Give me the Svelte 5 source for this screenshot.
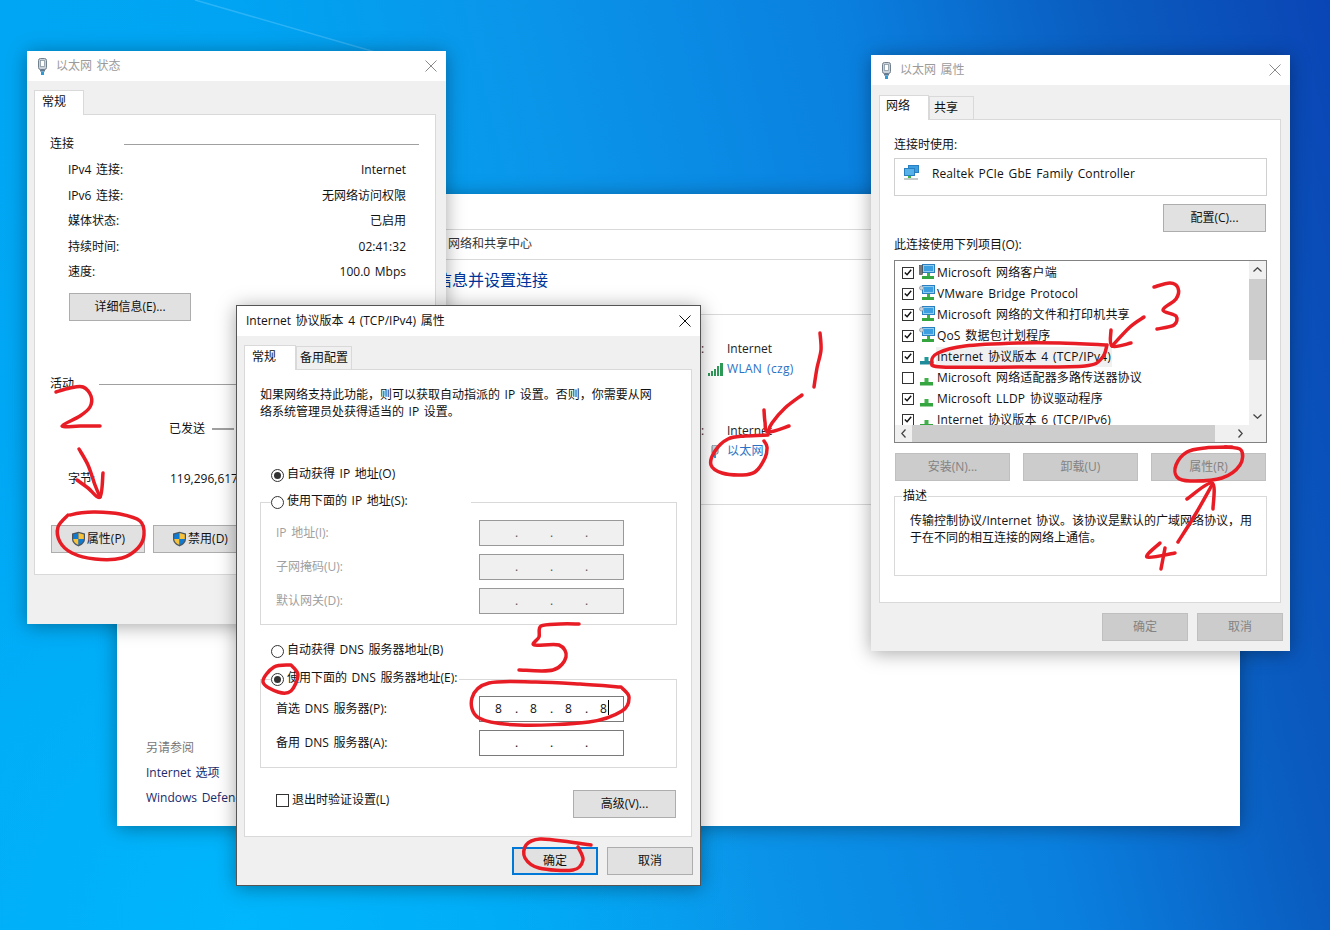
<script>
  // hand drawn red marks, one list of points per stroke
  const marks = [
    [[820,333],[821,350],[817,368],[814,387]],
    [[802,395],[785,408],[772,423],[768,432]],
    [[764,410],[765,422],[768,432],[789,426]],
    [[768,435],[745,436],[728,439],[715,451],[711,465],[722,473],[742,475],[755,472],[765,458],[767,447],[764,441]],
    [[56,392],[70,388],[83,387],[91,396],[90,407],[80,416],[62,426],[80,426],[100,426]],
    [[79,449],[88,465],[95,485],[100,497]],
    [[77,480],[88,488],[100,497],[103,473]],
    [[68,515],[58,527],[60,542],[72,553],[95,559],[122,558],[138,548],[144,535],[140,521],[120,514],[95,512],[80,513],[70,515]],
    [[1154,287],[1170,283],[1178,288],[1176,299],[1163,310],[1176,316],[1174,325],[1157,329]],
    [[1144,317],[1130,327],[1112,346]],
    [[1111,330],[1112,346],[1131,343]],
    [[1107,345],[1060,343],[1018,343],[965,346],[938,353],[932,362],[942,367],[1018,367],[1085,366],[1102,358],[1107,345]],
    [[1232,447],[1205,448],[1187,452],[1176,465],[1177,477],[1190,481],[1222,478],[1240,465],[1241,450],[1225,447]],
    [[1212,485],[1195,515],[1178,542]],
    [[1187,499],[1212,483],[1213,509]],
    [[1160,543],[1147,557],[1175,553]],
    [[1165,548],[1161,569]],
    [[579,624],[560,624],[541,626],[539,637],[534,645],[559,645],[566,657],[553,670],[519,670]],
    [[291,665],[274,667],[263,682],[278,692],[291,691],[298,675],[291,665]],
    [[621,687],[580,684],[536,682],[489,683],[472,698],[479,718],[519,725],[589,722],[622,711],[629,697],[621,687]],
    [[591,845],[570,842],[540,839],[526,845],[525,858],[539,868],[573,870],[583,860],[578,847]]
  ];

  // catmull-rom through the points
  function smooth(pts) {
    let d = `M${pts[0][0]} ${pts[0][1]}`;
    for (let i = 0; i < pts.length - 1; i++) {
      const a = pts[i - 1] || pts[i];
      const b = pts[i];
      const c = pts[i + 1];
      const e = pts[i + 2] || c;
      const c1x = b[0] + (c[0] - a[0]) / 6;
      const c1y = b[1] + (c[1] - a[1]) / 6;
      const c2x = c[0] - (e[0] - b[0]) / 6;
      const c2y = c[1] - (e[1] - b[1]) / 6;
      d += ` C${c1x} ${c1y} ${c2x} ${c2y} ${c[0]} ${c[1]}`;
    }
    return d;
  }

  const statusRows = [
    ['IPv4 连接:', 'Internet'],
    ['IPv6 连接:', '无网络访问权限'],
    ['媒体状态:', '已启用'],
    ['持续时间:', '02:41:32'],
    ['速度:', '100.0 Mbps']
  ];

  const components = [
    { name: 'Microsoft 网络客户端', on: true, icon: 'client' },
    { name: 'VMware Bridge Protocol', on: true, icon: 'service' },
    { name: 'Microsoft 网络的文件和打印机共享', on: true, icon: 'service' },
    { name: 'QoS 数据包计划程序', on: true, icon: 'service' },
    { name: 'Internet 协议版本 4 (TCP/IPv4)', on: true, icon: 'proto', selected: true },
    { name: 'Microsoft 网络适配器多路传送器协议', on: false, icon: 'proto' },
    { name: 'Microsoft LLDP 协议驱动程序', on: true, icon: 'proto' },
    { name: 'Internet 协议版本 6 (TCP/IPv6)', on: true, icon: 'proto' }
  ];
</script>

{#snippet plug()}
  <svg class="plug" width="10" height="17" viewBox="0 0 10 17">
    <rect x="0.5" y="0.5" width="8" height="11" rx="2" fill="#c9d2da" stroke="#71808e" />
    <rect x="2.5" y="2.5" width="4" height="6" fill="#fff" stroke="#8b98a4" stroke-width="0.8" />
    <rect x="2" y="11.5" width="5" height="2" fill="#62798f" />
    <rect x="3" y="13.5" width="3" height="3.5" fill="#2a9ad8" />
  </svg>
{/snippet}

{#snippet shield()}
  <svg class="shield" width="15" height="16" viewBox="0 0 15 16">
    <path d="M7.5 0.7L14 2.6V8C14 11.7 11 14 7.5 15.4C4 14 1 11.7 1 8V2.6Z" fill="#4a5560" />
    <path d="M7.5 2L7.5 8H2.2V3.5Z" fill="#0f7ad2" />
    <path d="M7.5 2L12.8 3.5V8H7.5Z" fill="#f6c13b" />
    <path d="M2.2 8H7.5V14C4.6 12.8 2.4 11 2.2 8Z" fill="#f6c13b" />
    <path d="M7.5 8H12.8C12.6 11 10.4 12.8 7.5 14Z" fill="#0f7ad2" />
  </svg>
{/snippet}

{#snippet check(on)}
  <span class="check">
    {#if on}
      <svg width="11" height="11" viewBox="0 0 11 11"><path d="M2 5.5L4.5 8L9 2.5" fill="none" stroke="#111" stroke-width="1.6" /></svg>
    {/if}
  </span>
{/snippet}

{#snippet radio(on)}
  <span class="radio">{#if on}<span class="dot"></span>{/if}</span>
{/snippet}

{#snippet ip(disabled, val, caret)}
  <div class="ip" class:off={disabled}>
    {#each [0, 1, 2, 3] as i}
      <span class="seg">
        {val}
        {#if caret && i === 3}<span class="caret"></span>{/if}
      </span>
      {#if i < 3}<span class="sep">.</span>{/if}
    {/each}
  </div>
{/snippet}

{#snippet compIcon(kind, active)}
  <svg class="comp-icon" width="16" height="17" viewBox="0 0 16 17">
    {#if kind === 'proto'}
      <rect x="5.5" y="9" width="4" height="4" fill={active ? '#1f9a9a' : '#3fb04a'} />
      <rect x="1" y="13" width="13" height="3.5" fill={active ? '#1f8a9a' : '#35a540'} />
    {:else}
      <rect x="3.5" y="0.5" width="12" height="8" fill="#8fcdf0" stroke="#2a7fc0" />
      <rect x="5" y="2" width="9" height="5" fill="#3c9fdf" />
      <rect x="8" y="9" width="3" height="3" fill="#3fb04a" />
      <rect x="3" y="12" width="12" height="3" fill="#35a540" />
      {#if kind === 'client'}
        <rect x="0.5" y="1.5" width="3" height="9" fill="#777" stroke="#444" stroke-width="0.6" />
      {:else}
        <circle cx="2.5" cy="3" r="2" fill="#cfd6dc" stroke="#8b98a4" stroke-width="0.8" />
      {/if}
    {/if}
  </svg>
{/snippet}

<main class="desktop">
  <svg class="streak" width="400" height="60" viewBox="0 0 400 60"><path d="M195 0L375 52" /></svg>

  <!-- control panel behind the dialogs -->
  <section class="win cp">
    <div class="cp-top"></div>
    <div class="cp-crumb">网络和共享中心</div>
    <div class="cp-head">查看基本网络信息并设置连接</div>
    <div class="cp-main">
      <aside class="cp-side">
        <div class="see">另请参阅</div>
        <div class="side-link">Internet 选项</div>
        <div class="side-link">Windows Defender 防火墙</div>
      </aside>
      <div class="cp-nets">
        <div class="net">
          <div class="net-col">:</div>
          <div>
            <div class="net-type">Internet</div>
            <div class="net-link">
              <svg class="wifi" width="16" height="13" viewBox="0 0 16 13">
                <rect x="0" y="10" width="2" height="3" fill="#2f9a58" />
                <rect x="3" y="8" width="2" height="5" fill="#2f9a58" />
                <rect x="6" y="6" width="2" height="7" fill="#2f9a58" />
                <rect x="9" y="3" width="2" height="10" fill="#2f9a58" />
                <rect x="12" y="0" width="3" height="13" fill="#2f9a58" />
              </svg>
              WLAN (czg)
            </div>
          </div>
        </div>
        <div class="net second">
          <div class="net-col">:</div>
          <div>
            <div class="net-type">Internet</div>
            <div class="net-link">
              <svg class="wifi" width="16" height="13" viewBox="0 0 16 13">
                <rect x="4" y="0" width="6" height="9" rx="1.5" fill="#c9d2da" stroke="#71808e" />
                <rect x="6" y="9" width="2" height="4" fill="#2a9ad8" />
              </svg>
              以太网
            </div>
          </div>
        </div>
      </div>
    </div>
  </section>

  <!-- ethernet status -->
  <section class="win status">
    <header class="title dim">
      {@render plug()}
      <span class="title-text">以太网 状态</span>
      <span class="close"><svg width="12" height="12" viewBox="0 0 12 12"><path d="M0.5 0.5L11.5 11.5M11.5 0.5L0.5 11.5" stroke="#8a8a8a" fill="none" /></svg></span>
    </header>
    <div class="body status-body">
      <div class="tabs">
        <div class="tab active" style="width: 50px">常规</div>
      </div>
      <div class="panel status-panel">
        <div class="group-head first"><span class="gh-text">连接</span><span class="gh-line"></span></div>
        <div class="stat-rows">
          {#each statusRows as r}
            <div class="stat-row"><span>{r[0]}</span><span>{r[1]}</span></div>
          {/each}
        </div>
        <button class="btn detail">详细信息(E)...</button>
        <div class="group-head second"><span class="gh-text short">活动</span><span class="gh-line"></span></div>
        <div class="sent"><span>已发送</span><span class="sent-line"></span></div>
        <div class="bytes"><span class="bytes-l">字节:</span><span>119,296,617</span></div>
        <div class="status-btns">
          <button class="btn shield-btn">{@render shield()}属性(P)</button>
          <button class="btn shield-btn">{@render shield()}禁用(D)</button>
        </div>
      </div>
    </div>
  </section>

  <!-- adapter properties -->
  <section class="win adapter">
    <header class="title dim">
      {@render plug()}
      <span class="title-text">以太网 属性</span>
      <span class="close"><svg width="12" height="12" viewBox="0 0 12 12"><path d="M0.5 0.5L11.5 11.5M11.5 0.5L0.5 11.5" stroke="#8a8a8a" fill="none" /></svg></span>
    </header>
    <div class="body adapter-body">
      <div class="tabs">
        <div class="tab active" style="width: 50px">网络</div>
        <div class="tab" style="width: 45px">共享</div>
      </div>
      <div class="panel adapter-panel">
        <div class="lbl first-lbl">连接时使用:</div>
        <div class="nic">
          <svg width="16" height="16" viewBox="0 0 16 16">
            <rect x="4.5" y="0.5" width="10" height="7" fill="#3c9fdf" stroke="#2a7fc0" />
            <rect x="0.5" y="3.5" width="10" height="7" fill="#56b2e8" stroke="#2a7fc0" />
            <rect x="4" y="11" width="3" height="2" fill="#3fb04a" />
            <rect x="0" y="13" width="14" height="2" fill="#c4ccc8" />
          </svg>
          <span>Realtek PCIe GbE Family Controller</span>
        </div>
        <div class="cfg-row"><button class="btn cfg">配置(C)...</button></div>
        <div class="lbl">此连接使用下列项目(O):</div>
        <div class="list">
          <div class="list-rows">
            {#each components as c}
              <div class="list-row">
                {@render check(c.on)}
                {@render compIcon(c.icon, c.selected)}
                <span class="comp-name" class:sel={c.selected}>{c.name}</span>
              </div>
            {/each}
          </div>
          <div class="vbar">
            <svg width="9" height="5" viewBox="0 0 9 5"><path d="M0.5 4.5L4.5 0.8L8.5 4.5" fill="none" stroke="#444" stroke-width="1.3" /></svg>
            <div class="vtrack"><div class="vthumb"></div></div>
            <svg width="9" height="5" viewBox="0 0 9 5"><path d="M0.5 0.5L4.5 4.2L8.5 0.5" fill="none" stroke="#444" stroke-width="1.3" /></svg>
          </div>
          <div class="hbar">
            <svg width="5" height="9" viewBox="0 0 5 9"><path d="M4.5 0.5L0.8 4.5L4.5 8.5" fill="none" stroke="#444" stroke-width="1.3" /></svg>
            <div class="hthumb"></div>
            <svg width="5" height="9" viewBox="0 0 5 9"><path d="M0.5 0.5L4.2 4.5L0.5 8.5" fill="none" stroke="#444" stroke-width="1.3" /></svg>
          </div>
          <div class="corner"></div>
        </div>
        <div class="comp-btns">
          <button class="btn off">安装(N)...</button>
          <button class="btn off">卸载(U)</button>
          <button class="btn off">属性(R)</button>
        </div>
        <fieldset class="desc">
          <legend>描述</legend>
          传输控制协议/Internet 协议。该协议是默认的广域网络协议，用<br />
          于在不同的相互连接的网络上通信。
        </fieldset>
      </div>
      <div class="foot">
        <button class="btn off act">确定</button>
        <button class="btn off act">取消</button>
      </div>
    </div>
  </section>

  <!-- ipv4 properties, the active dialog -->
  <section class="win ipv4">
    <header class="title">
      <span class="title-text">Internet 协议版本 4 (TCP/IPv4) 属性</span>
      <span class="close"><svg width="12" height="12" viewBox="0 0 12 12"><path d="M0.5 0.5L11.5 11.5M11.5 0.5L0.5 11.5" stroke="#111" fill="none" /></svg></span>
    </header>
    <div class="body ipv4-body">
      <div class="tabs">
        <div class="tab active" style="width: 52px">常规</div>
        <div class="tab" style="width: 56px">备用配置</div>
      </div>
      <div class="panel ipv4-panel">
        <p class="intro">如果网络支持此功能，则可以获取自动指派的 IP 设置。否则，你需要从网<br />络系统管理员处获得适当的 IP 设置。</p>
        <div class="radio-row auto-ip">{@render radio(true)}自动获得 IP 地址(O)</div>
        <fieldset class="ip-box ip-static">
          <legend style="width: 200px"><span class="radio-row">{@render radio(false)}使用下面的 IP 地址(S):</span></legend>
          <div class="f-row"><span class="f-lbl muted">IP 地址(I):</span>{@render ip(true, '', false)}</div>
          <div class="f-row"><span class="f-lbl muted">子网掩码(U):</span>{@render ip(true, '', false)}</div>
          <div class="f-row"><span class="f-lbl muted">默认网关(D):</span>{@render ip(true, '', false)}</div>
        </fieldset>
        <div class="radio-row auto-dns">{@render radio(false)}自动获得 DNS 服务器地址(B)</div>
        <fieldset class="ip-box ip-dns">
          <legend style="width: 188px"><span class="radio-row">{@render radio(true)}使用下面的 DNS 服务器地址(E):</span></legend>
          <div class="f-row"><span class="f-lbl">首选 DNS 服务器(P):</span>{@render ip(false, '8', true)}</div>
          <div class="f-row"><span class="f-lbl">备用 DNS 服务器(A):</span>{@render ip(false, '', false)}</div>
        </fieldset>
        <div class="adv-row">
          <div class="verify">{@render check(false)}退出时验证设置(L)</div>
          <button class="btn adv">高级(V)...</button>
        </div>
      </div>
      <div class="foot">
        <button class="btn act primary">确定</button>
        <button class="btn act">取消</button>
      </div>
    </div>
  </section>

  <svg class="ink" width="1330" height="930" viewBox="0 0 1330 930">
    {#each marks as m}
      <path d={smooth(m)} />
    {/each}
  </svg>
</main>

<style>
  :global(body) {
    margin: 0;
  }
  .desktop {
    position: relative;
    width: 1330px;
    height: 930px;
    overflow: hidden;
    font-family: "Open Sans", "Noto Sans CJK SC", sans-serif;
    font-size: 12px;
    line-height: 16px;
    word-spacing: 1.5px;
    color: #111;
    background:
      radial-gradient(ellipse 520px 560px at 240px 930px, #00b6fc 0%, rgba(0, 182, 252, 0) 100%),
      linear-gradient(76deg, #00a8f4 0%, #00a4f2 30%, #0a96ea 47%, #0a7fde 69%, #0a5cc0 85%, #0a45b5 100%);
  }
  .streak {
    position: absolute;
    left: 0;
    top: 0;
  }
  .streak path {
    fill: none;
    stroke: rgba(120, 210, 255, 0.35);
    stroke-width: 1.5;
  }
  .win {
    position: absolute;
    box-sizing: border-box;
    background: #fff;
    border: 1px solid #9d9d9d;
    box-shadow: 0 2px 18px rgba(0, 0, 0, 0.35);
    display: flex;
    flex-direction: column;
  }
  .cp {
    left: 117px;
    top: 194px;
    width: 1123px;
    height: 632px;
    border: 0;
  }
  .status {
    left: 27px;
    top: 51px;
    width: 419px;
    height: 573px;
    border: 0;
  }
  .adapter {
    left: 871px;
    top: 55px;
    width: 419px;
    height: 596px;
    border: 0;
  }
  .ipv4 {
    left: 236px;
    top: 305px;
    width: 465px;
    height: 581px;
    border-color: #555;
  }
  .title {
    height: 30px;
    flex: none;
    display: flex;
    align-items: center;
    padding: 0 9px;
    background: #fff;
  }
  .dim {
    color: #9b9b9b;
  }
  .plug {
    margin: 0 8px 0 2px;
  }
  .title-text {
    flex: 1;
  }
  .close {
    display: flex;
  }
  .body {
    flex: 1;
    background: #f0f0f0;
    display: flex;
    flex-direction: column;
  }
  .tabs {
    display: flex;
    align-items: flex-end;
    height: 25px;
    position: relative;
    z-index: 1;
  }
  .tab {
    box-sizing: border-box;
    height: 23px;
    margin-bottom: 1px;
    padding: 3px 0 0 4px;
    border: 1px solid #d9d9d9;
    border-bottom: 0;
    background: #f0f0f0;
  }
  .tab.active {
    height: 25px;
    margin-bottom: 0;
    padding: 3px 0 0 6px;
    background: #fff;
  }
  .panel {
    box-sizing: border-box;
    background: #fff;
    border: 1px solid #d9d9d9;
    margin-top: -1px;
  }
  .btn {
    box-sizing: border-box;
    height: 28px;
    padding: 0;
    background: #e1e1e1;
    border: 1px solid #adadad;
    font: inherit;
    color: #111;
  }
  .btn.off {
    background: #cccccc;
    border-color: #bfbfbf;
    color: #838383;
  }

  /* control panel */
  .cp-top {
    height: 35px;
    flex: none;
  }
  .cp-crumb {
    height: 31px;
    flex: none;
    box-sizing: border-box;
    padding: 6px 0 0 331px;
    border-top: 1px solid #d9d9d9;
    border-bottom: 1px solid #d9d9d9;
    color: #333;
  }
  .cp-head {
    height: 55px;
    flex: none;
    box-sizing: border-box;
    padding: 9px 0 0 223px;
    border-bottom: 1px solid #d9d9d9;
    font-size: 16px;
    line-height: 22px;
    color: #003399;
  }
  .cp-main {
    flex: 1;
    display: flex;
    justify-content: space-between;
    min-height: 0;
  }
  .cp-side {
    align-self: flex-end;
    padding: 0 0 11px 29px;
  }
  .see {
    color: #777;
    height: 25px;
  }
  .side-link {
    height: 25px;
    color: #1a2a6c;
    white-space: nowrap;
  }
  .cp-nets {
    box-sizing: border-box;
    width: 790px;
    height: 190px;
    border-bottom: 1px solid #d9d9d9;
    padding: 26px 0 0 251px;
  }
  .net {
    display: flex;
    gap: 23px;
  }
  .net.second {
    margin-top: 46px;
  }
  .net-col {
    width: 3px;
    color: #333;
  }
  .net-type {
    height: 20px;
    color: #222;
  }
  .net-link {
    position: relative;
    color: #2b72c4;
    letter-spacing: 0.3px;
  }
  .wifi {
    position: absolute;
    left: -19px;
    top: 2px;
  }

  /* status */
  .status-body {
    padding: 9px 0 0 7px;
  }
  .status-body .tab.active {
    padding-left: 7px;
  }
  .status-panel {
    width: 402px;
    height: 461px;
  }
  .group-head {
    display: flex;
    align-items: center;
    height: 16px;
    padding: 0 16px 0 15px;
  }
  .group-head.first {
    margin-top: 21px;
  }
  .group-head.second {
    margin-top: 55px;
  }
  .gh-text {
    width: 74px;
  }
  .gh-text.short {
    width: 49px;
  }
  .gh-line {
    flex: 1;
    height: 1px;
    background: #a0a0a0;
  }
  .stat-rows {
    margin-top: 5.5px;
    padding: 0 29px 0 33px;
  }
  .stat-row {
    display: flex;
    justify-content: space-between;
    height: 25.5px;
    align-items: center;
  }
  .detail {
    display: block;
    width: 122px;
    margin: 8px 0 0 34px;
  }
  .sent {
    display: flex;
    align-items: center;
    gap: 7px;
    height: 16px;
    margin-top: 29px;
    padding-left: 134px;
  }
  .sent-line {
    width: 22px;
    height: 2px;
    background: #a0a0a0;
  }
  .bytes {
    display: flex;
    height: 16px;
    margin-top: 34px;
    padding-left: 33px;
    white-space: nowrap;
  }
  .bytes-l {
    width: 102px;
  }
  .status-btns {
    display: flex;
    gap: 8px;
    margin: 38px 0 0 16px;
  }
  .shield-btn {
    width: 94px;
    display: flex;
    align-items: center;
    justify-content: center;
    gap: 1px;
  }

  /* adapter */
  .adapter-body {
    padding: 10px 7px 0 8px;
  }
  .adapter-body .tab.active {
    padding-top: 2px;
  }
  .adapter-panel {
    width: 402px;
    height: 484px;
    padding-left: 14px;
  }
  .lbl {
    height: 16px;
    margin-top: 5px;
  }
  .first-lbl {
    margin-top: 17px;
  }
  .nic {
    box-sizing: border-box;
    display: flex;
    gap: 12px;
    width: 373px;
    height: 38px;
    margin-top: 5px;
    padding: 6px 0 0 9px;
    border: 1px solid #d0d0d0;
  }
  .nic span {
    margin-top: 1px;
    letter-spacing: 0.1px;
  }
  .cfg-row {
    display: flex;
    justify-content: flex-end;
    width: 372px;
    margin-top: 8px;
  }
  .cfg {
    width: 103px;
  }
  .list {
    box-sizing: border-box;
    width: 373px;
    height: 183px;
    margin-top: 7px;
    border: 1px solid #828282;
    display: grid;
    grid-template-columns: 354px 17px;
    grid-template-rows: 164px 17px;
  }
  .list-rows {
    overflow: hidden;
    padding-top: 1px;
  }
  .list-row {
    display: flex;
    align-items: center;
    height: 21px;
    padding-left: 7px;
    white-space: nowrap;
  }
  .check {
    box-sizing: border-box;
    flex: none;
    display: flex;
    align-items: center;
    justify-content: center;
    width: 12px;
    height: 12px;
    border: 1px solid #333;
    background: #fff;
  }
  .comp-icon {
    flex: none;
    margin: 0 1px 0 5px;
  }
  .comp-name {
    padding: 2px 1px;
    letter-spacing: 0.15px;
  }
  .comp-name.sel {
    background: #f0f0f0;
  }
  .vbar {
    display: flex;
    flex-direction: column;
    align-items: center;
    background: #f0f0f0;
    padding: 6px 0;
    box-sizing: border-box;
    gap: 7px;
  }
  .vtrack {
    flex: 1;
    width: 100%;
  }
  .vthumb {
    height: 81px;
    background: #cdcdcd;
  }
  .hbar {
    display: flex;
    align-items: center;
    background: #f0f0f0;
    padding: 0 6px;
    gap: 6px;
  }
  .hthumb {
    width: 303px;
    height: 100%;
    margin-right: auto;
    background: #cdcdcd;
  }
  .corner {
    background: #f0f0f0;
  }
  .comp-btns {
    display: flex;
    gap: 13px;
    margin: 10px 0 0 1px;
  }
  .comp-btns .btn {
    width: 115px;
  }
  fieldset {
    box-sizing: border-box;
    margin: 0;
    min-width: 0;
    border: 1px solid #d9d9d9;
  }
  legend {
    padding: 0;
  }
  .desc {
    width: 373px;
    height: 88px;
    margin-top: 7px;
    padding: 8px 0 0 15px;
    line-height: 17px;
  }
  .desc legend {
    margin-left: -8px;
    padding: 0 1px;
    line-height: 16px;
  }
  .foot {
    display: flex;
    justify-content: flex-end;
    gap: 9px;
    margin-top: 10px;
  }
  .act {
    width: 86px;
  }
  .primary {
    border: 2px solid #0078d7;
  }

  /* ipv4 */
  .ipv4-body {
    padding: 9px 7px 0 7px;
  }
  .ipv4-panel {
    width: 448px;
    height: 468px;
    padding-top: 16px;
  }
  .ipv4 .tab {
    padding-left: 3px;
  }
  .ipv4 .tab.active {
    padding-left: 7px;
  }
  .intro {
    margin: 0 0 0 15px;
    line-height: 17px;
  }
  .radio-row {
    display: flex;
    align-items: center;
    gap: 3px;
    height: 16px;
    white-space: nowrap;
  }
  .radio {
    box-sizing: border-box;
    display: flex;
    align-items: center;
    justify-content: center;
    width: 13px;
    height: 13px;
    margin-top: 2px;
    border: 1px solid #333;
    border-radius: 50%;
    background: #fff;
    flex: none;
  }
  .dot {
    width: 7px;
    height: 7px;
    border-radius: 50%;
    background: #333;
  }
  .auto-ip {
    margin: 46px 0 0 26px;
  }
  .ip-box {
    width: 417px;
    margin-left: 15px;
    padding: 0 0 0 15px;
  }
  .ip-box legend {
    box-sizing: border-box;
    margin-left: -5px;
    padding-bottom: 2px;
  }
  .ip-static {
    margin-top: 11px;
    padding-top: 9px;
    padding-bottom: 10px;
  }
  .ip-dns {
    margin-top: 12px;
    padding-top: 8px;
    padding-bottom: 11px;
  }
  .auto-dns {
    margin: 17px 0 0 26px;
  }
  .f-row {
    display: flex;
    align-items: center;
    height: 26px;
    margin-bottom: 8px;
  }
  .f-row:last-child {
    margin-bottom: 0;
  }
  .f-lbl {
    width: 203px;
  }
  .muted {
    color: #a0a0a0;
  }
  .ip {
    box-sizing: border-box;
    display: flex;
    width: 145px;
    height: 26px;
    padding-left: 2px;
    border: 1px solid #7a7a7a;
    line-height: 24px;
    background: #fff;
  }
  .ip.off {
    background: #f0f0f0;
    border-color: #999;
    color: #555;
  }
  .seg {
    position: relative;
    width: 33px;
    text-align: center;
  }
  .sep {
    width: 2px;
    text-align: center;
  }
  .caret {
    position: absolute;
    left: 21px;
    top: 3px;
    width: 1px;
    height: 15px;
    background: #000;
  }
  .adv-row {
    display: flex;
    justify-content: space-between;
    align-items: flex-start;
    margin-top: 22px;
    padding: 0 15px 0 31px;
  }
  .verify {
    display: flex;
    align-items: center;
    gap: 3px;
    height: 16px;
    margin-top: 2px;
  }
  .verify .check {
    width: 13px;
    height: 13px;
  }
  .adv {
    width: 103px;
  }

  .ink {
    position: absolute;
    left: 0;
    top: 0;
    pointer-events: none;
  }
  .ink path {
    fill: none;
    stroke: #e81c24;
    stroke-width: 3.5;
    stroke-linecap: round;
    stroke-linejoin: round;
  }
</style>
